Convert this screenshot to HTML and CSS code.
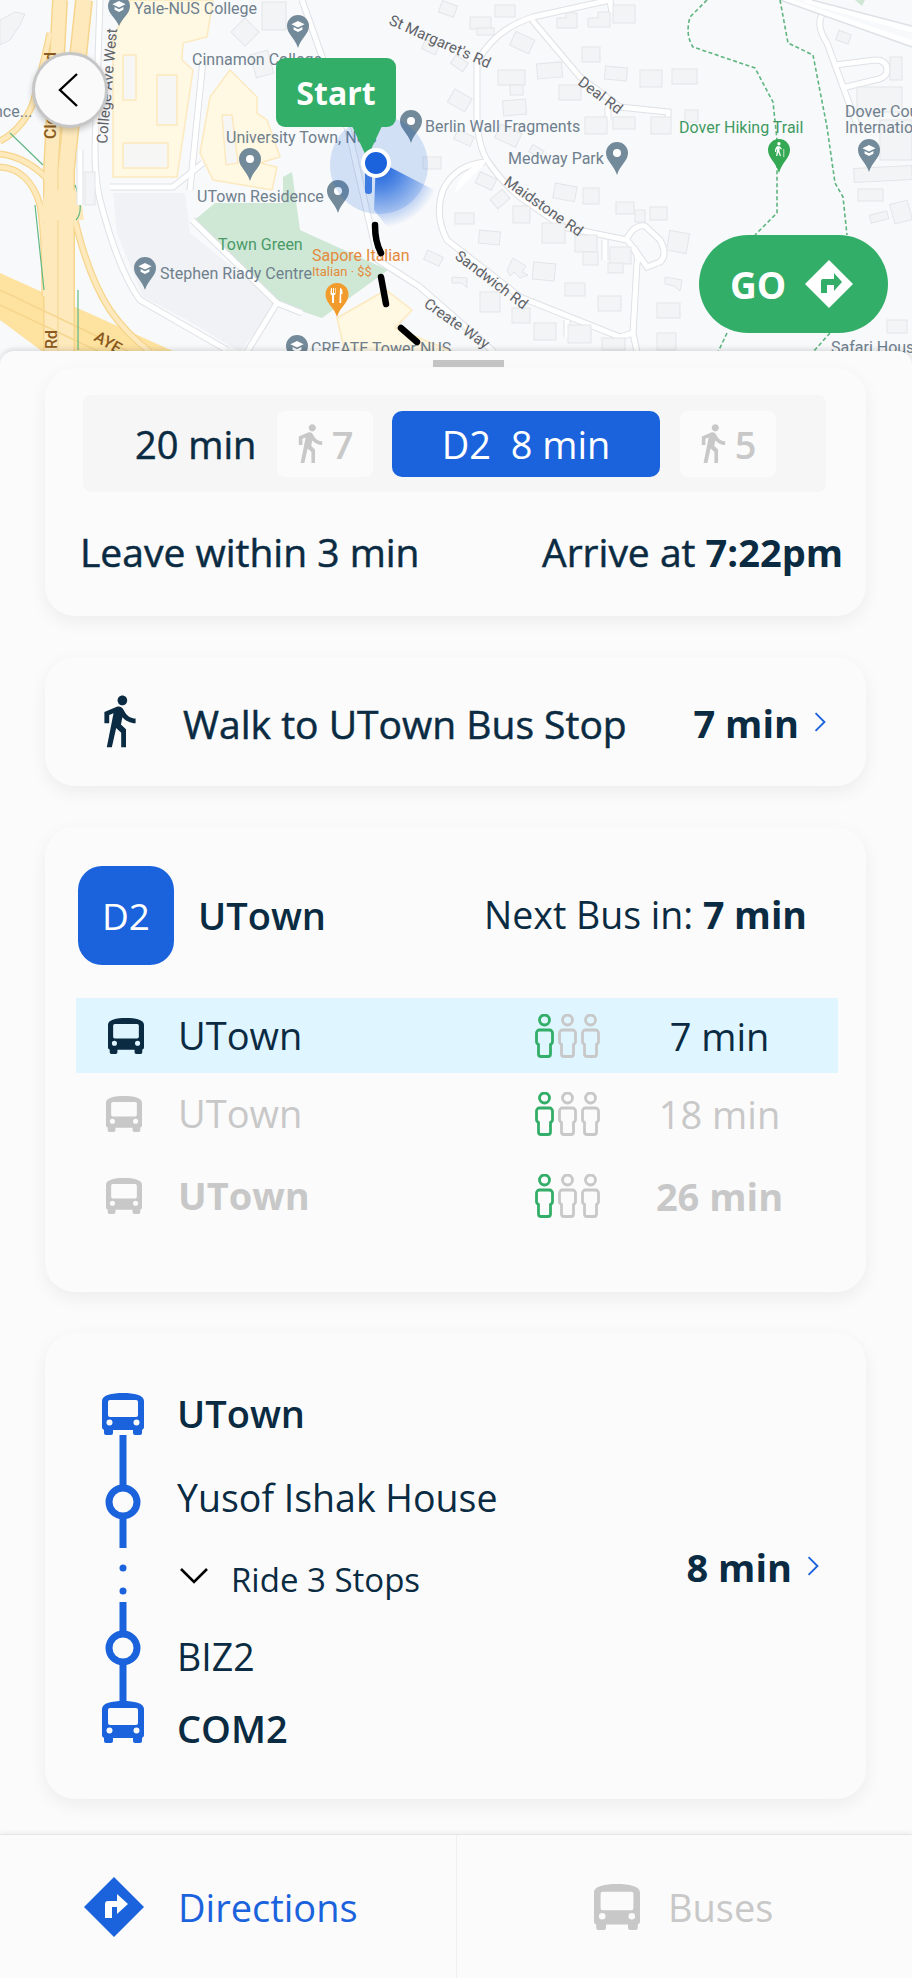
FILE: index.html
```html
<!DOCTYPE html>
<html>
<head>
    <meta charset="utf-8" />
    <title>Directions</title>
    <link rel="stylesheet" href="styles.css">
</head>
<body>

    <svg class="defs" width="0" height="0">
        <symbol id="bus" viewBox="0 0 42 42">
            <path fill-rule="evenodd" d="M0 8C0 2 10 0 21 0s21 2 21 8v26c0 1.500-.8 2.500-2 2.800V40a2 2 0 0 1-2 2h-5a2 2 0 0 1-2-2v-3H11v3a2 2 0 0 1-2 2H4a2 2 0 0 1-2-2v-3.200C.8 36.500 0 35.500 0 34zM8 7a2 2 0 0 0-2 2v13a2 2 0 0 0 2 2h26a2 2 0 0 0 2-2V9a2 2 0 0 0-2-2zM7.500 26.500a3 3 0 1 0 0 6 3 3 0 0 0 0-6zM34.500 26.500a3 3 0 1 0 0 6 3 3 0 0 0 0-6z" />
        </symbol>
        <symbol id="walk" viewBox="5 1 15 23">
            <path d="M13.500 5.500c1.100 0 2-.9 2-2s-.9-2-2-2-2 .9-2 2 .9 2 2 2zM9.800 8.900L7 23h2.100l1.800-8 2.100 2v6h2v-7.500l-2.100-2 .6-3C14.800 12 16.800 13 19 13v-2c-1.900 0-3.500-1-4.300-2.400l-1-1.600c-.4-.6-1-1-1.700-1-.3 0-.5.1-.8.1L6 8.300V13h2V9.600l1.800-.7" />
        </symbol>
        <symbol id="person" viewBox="0 0 21 44">
            <circle cx="10.500" cy="6" r="5" fill="none" stroke="currentColor" stroke-width="2.800" />
            <path fill="none" stroke="currentColor" stroke-width="2.800" stroke-linejoin="round" d="M5.500 16h10a3 3 0 0 1 3 3v8.500a3 3 0 0 1-2 2.800V40a2.500 2.500 0 0 1-2.500 2.500H7A2.500 2.500 0 0 1 4.500 40v-9.700a3 3 0 0 1-2-2.800V19a3 3 0 0 1 3-3z" />
        </symbol>
        <symbol id="chev" viewBox="0 0 12 18">
            <path d="M2 1l8 8-8 8" fill="none" stroke="currentColor" stroke-width="1.700" />
        </symbol>
        <symbol id="cap" viewBox="0 0 12 10">
            <path fill="#fff" d="M0 3l6-3 6 3-6 3zM2 5.500V8l4 2 4-2V5.500L6 7.500z" />
        </symbol>
    </svg>

    <div id="Phone">

        <div class="map">
            <svg class="mapArt" viewBox="0 0 912 370" width="912" height="370">
                <defs>
                    <g id="roads" fill="none">
                        <path d="M610 0L533 17Q493 30 477 63V117Q478 145 487 160Q500 180 520 197L563 227L627 240Q640 255 637 263L633 333L637 352" />
                        <path d="M485 162Q455 165 443 190Q434 215 447 240L520 297L620 337L633 333" />
                        <path d="M532 20L580 77L620 107L668 112V117" />
                        <path d="M627 238Q635 224 645 226L660 240Q668 255 660 262L647 267L633 247" />
                        <path d="M610 0L612 13M608 107V120M605 240V260M567 320V337" />
                        <path d="M302 0L349 133L378 260L420 287L494 352" />
                        <path d="M100 0L95 150Q95 180 100 200Q118 270 140 300L227 350" />
                        <path d="M203 163L173 187H110" />
                        <path d="M203 60L190 190" />
                        <path d="M192 220L277 303L247 352M277 303L302 313" />
                        <path d="M823 13Q815 25 827 43L860 133" />
                        <path d="M835 65L875 60Q887 60 887 70Q887 78 875 80L842 88" />
                        <path d="M80 150V205" />
                    </g>
                    <g id="highway" fill="none">
                        <path stroke-width="18" d="M84 0L66 170V352" />
                        <path stroke-width="16" d="M60 0L51 170V352" />
                        <path stroke-width="7" d="M0 154C20 156 38 168 50 182" />
                        <path stroke-width="7" d="M0 167C18 168 33 180 40 205C46 240 44 270 45 296" />
                        <path stroke-width="7" d="M72 207C78 235 90 280 110 310C122 328 135 340 150 352" />
                        <path stroke-width="7" d="M0 141C12 135 26 122 33 103C38 85 44 60 50 33" />
                    </g>
                    <radialGradient id="beam" gradientUnits="userSpaceOnUse" cx="380" cy="168" r="60">
                        <stop offset="0" stop-color="#1a63dd" />
                        <stop offset=".35" stop-color="#1a63dd" stop-opacity=".7" />
                        <stop offset="1" stop-color="#1a63dd" stop-opacity="0" />
                    </radialGradient>
                </defs>

                <!-- grey campus block -->
                <path fill="#f1f2f5" d="M113 193H185L190 233L277 303L240 352L187 320L143 297L117 233Z" />

                <!-- campus -->
                <path fill="#fff8e3" stroke="#fde9bf" stroke-width="1.500" d="M130 0H213L207 37L183 43L182 60L193 70L177 177H113V40Z" />
                <g fill="#f6f6f4" stroke="#fde9bf" stroke-width="1.500">
                    <rect x="123" y="55" width="13" height="45" />
                    <rect x="157" y="75" width="20" height="50" />
                    <rect x="123" y="143" width="45" height="25" />
                </g>
                <path fill="#fff8e3" stroke="#fde9bf" stroke-width="1.500" d="M230 70L257 97V113L267 120L280 157L260 163L277 167L272 190L213 180L200 153L210 97Z" />
                <path fill="#f6f6f4" stroke="#fde9bf" stroke-width="1.500" d="M222 115L232 115L238 163L226 165Z" />
                <path fill="#fff8e3" stroke="#fde9bf" stroke-width="1.500" d="M337 318L386 290L412 310L395 328L454 352H345Z" />

                <!-- park -->
                <path fill="#cfe8d6" d="M197 218L215 203H283V177L292 172L300 230L388 270L322 318L277 303L192 220Z" />

                <!-- highway -->
                <path fill="#fde2a0" d="M0 273L175 352H43L0 320Z" />
                <use href="#highway" stroke="#f6d58d" />
                <g fill="none" stroke="#fde9bc">
                    <path stroke-width="15" d="M84 0L66 170V352" />
                    <path stroke-width="13" d="M60 0L51 170V352" />
                    <path stroke-width="4.500" d="M0 154C20 156 38 168 50 182" />
                    <path stroke-width="4.500" d="M0 167C18 168 33 180 40 205C46 240 44 270 45 296" />
                    <path stroke-width="4.500" d="M72 207C78 235 90 280 110 310C122 328 135 340 150 352" />
                    <path stroke-width="4.500" d="M0 141C12 135 26 122 33 103C38 85 44 60 50 33" />
                </g>
                <path fill="#fde9bc" d="M45 190H80L84 220H40Z" />
                <path fill="none" stroke="#f6d58d" stroke-width="1.500" d="M0 290L130 352M0 305L100 352" />
                <path fill="none" stroke="#62b883" stroke-width="1.200" d="M10 133L43 165M75 185Q85 210 76 220M35 205L44 290M78 290V350" />

                <!-- roads -->
                <use href="#roads" stroke="#dfe1e6" stroke-width="7" />
                <use href="#roads" stroke="#ffffff" stroke-width="5" />
                <path fill="#ffffff" d="M483 166L455 193Q458 172 485 160Z" />
                <g fill="none" stroke="#ffffff" stroke-width="5">
                    <path d="M785 0L912 43" />
                    <path d="M805 0L912 30" />
                </g>
                <g fill="none" stroke="#dfe1e6" stroke-width="1.500">
                    <path d="M780 0L912 47" />
                    <path d="M812 0L912 26" />
                </g>
                <path fill="#cfe8d6" d="M855 0H865L862 6Z" />

                <!-- buildings -->
                <g fill="#f3f4f6" stroke="#e3e5e8">
                    <rect x="440" y="3" width="16" height="12" transform="rotate(20 448 9)" />
                    <rect x="470" y="17" width="21" height="12" />
                    <rect x="477" y="28" width="17" height="7" />
                    <rect x="495" y="5" width="20" height="12" />
                    <path d="M557 18H566V13H577V28H557Z" />
                    <path d="M588 18H598V12H610V27H588Z" />
                    <rect x="613" y="5" width="22" height="18" />
                    <rect x="512" y="35" width="21" height="15" transform="rotate(25 522 42)" />
                    <rect x="582" y="47" width="18" height="15" />
                    <rect x="498" y="70" width="27" height="15" />
                    <rect x="537" y="63" width="25" height="15" transform="rotate(-5 549 70)" />
                    <rect x="510" y="85" width="13" height="10" />
                    <rect x="559" y="85" width="22" height="15" />
                    <rect x="605" y="67" width="22" height="13" transform="rotate(5 616 73)" />
                    <rect x="640" y="70" width="22" height="17" />
                    <rect x="672" y="69" width="25" height="15" />
                    <rect x="503" y="100" width="23" height="15" transform="rotate(-5 514 107)" />
                    <rect x="450" y="93" width="20" height="15" transform="rotate(30 460 100)" />
                    <rect x="423" y="42" width="15" height="10" transform="rotate(25 430 47)" />
                    <rect x="452" y="58" width="15" height="10" transform="rotate(35 459 63)" />
                    <rect x="585" y="117" width="22" height="17" />
                    <rect x="613" y="117" width="22" height="12" />
                    <rect x="651" y="117" width="20" height="17" />
                    <rect x="685" y="110" width="13" height="12" />
                    <rect x="497" y="128" width="23" height="15" transform="rotate(25 508 135)" />
                    <rect x="455" y="133" width="18" height="10" transform="rotate(25 464 138)" />
                    <rect x="530" y="147" width="13" height="8" transform="rotate(30 536 151)" />
                    <rect x="423" y="157" width="18" height="12" />
                    <rect x="477" y="175" width="18" height="12" transform="rotate(25 486 181)" />
                    <rect x="492" y="193" width="16" height="12" transform="rotate(-40 500 199)" />
                    <rect x="554" y="185" width="22" height="15" transform="rotate(10 565 192)" />
                    <rect x="583" y="188" width="16" height="16" />
                    <rect x="616" y="202" width="18" height="12" />
                    <rect x="635" y="210" width="10" height="12" />
                    <rect x="650" y="207" width="17" height="13" />
                    <rect x="668" y="232" width="20" height="20" transform="rotate(10 678 242)" />
                    <rect x="513" y="206" width="17" height="17" />
                    <rect x="455" y="213" width="19" height="11" />
                    <rect x="542" y="223" width="23" height="20" />
                    <rect x="575" y="235" width="22" height="17" />
                    <rect x="583" y="252" width="15" height="13" />
                    <rect x="610" y="247" width="21" height="17" />
                    <rect x="608" y="263" width="15" height="10" />
                    <rect x="479" y="231" width="21" height="13" transform="rotate(5 489 237)" />
                    <rect x="425" y="253" width="17" height="10" transform="rotate(25 433 258)" />
                    <rect x="533" y="263" width="22" height="17" transform="rotate(5 544 271)" />
                    <path d="M507 270L513 258L526 266L522 272L528 275L520 278L514 272L510 276Z" />
                    <rect x="565" y="283" width="20" height="13" />
                    <rect x="598" y="296" width="23" height="15" />
                    <rect x="480" y="292" width="20" height="20" />
                    <rect x="512" y="308" width="18" height="15" />
                    <rect x="534" y="323" width="22" height="17" />
                    <rect x="568" y="325" width="23" height="18" />
                    <rect x="602" y="338" width="23" height="12" />
                    <rect x="657" y="303" width="23" height="15" />
                    <rect x="657" y="333" width="19" height="17" />
                    <path d="M665 277L682 280L680 291L674 286L665 284Z" />
                    <path d="M452 277L467 278V288L462 283L452 283Z" />
                    <rect x="837" y="32" width="13" height="10" transform="rotate(20 843 37)" />
                    <rect x="890" y="57" width="12" height="23" />
                    <rect x="857" y="87" width="45" height="25" />
                    <rect x="880" y="120" width="32" height="40" />
                    <rect x="854" y="167" width="58" height="14" transform="rotate(-3 883 174)" />
                    <rect x="858" y="189" width="25" height="12" />
                    <rect x="870" y="213" width="18" height="8" transform="rotate(-15 879 217)" />
                    <rect x="892" y="202" width="18" height="20" transform="rotate(-15 901 212)" />
                    <rect x="887" y="320" width="20" height="13" />
                    <rect x="235" y="22" width="20" height="20" transform="rotate(45 245 32)" />
                    <rect x="253" y="52" width="18" height="24" transform="rotate(-15 262 64)" />
                    <rect x="262" y="2" width="24" height="28" />
                    <path d="M0 20L15 12L25 14L20 25L10 40L0 45Z" />
                    <rect x="85" y="172" width="10" height="33" />
                </g>

                <!-- trails -->
                <g fill="none" stroke="#5fb57f" stroke-width="1.600" stroke-dasharray="4 2.500">
                    <path d="M707 0L690 17Q685 35 693 47L755 68L773 102L777 140V213L755 235" />
                    <path d="M780 0L788 43L813 55L827 127L835 183L843 197L847 235" />
                    <path d="M727 333L718 352M830 333L813 352" />
                </g>

                <!-- pins -->
                <g class="pinGrey">
                    <path d="M119 -5a11 11 0 0 1 11 11c0 8-8 12-11 20c-3-8-11-12-11-20a11 11 0 0 1 11-11z" />
                    <path d="M298 15a11 11 0 0 1 11 11c0 8-8 12-11 22c-3-10-11-14-11-22a11 11 0 0 1 11-11z" />
                    <path d="M411 110a11 11 0 0 1 11 11c0 8-8 12-11 22c-3-10-11-14-11-22a11 11 0 0 1 11-11z" />
                    <path d="M617 142a11 11 0 0 1 11 11c0 8-8 12-11 22c-3-10-11-14-11-22a11 11 0 0 1 11-11z" />
                    <path d="M869 139a11 11 0 0 1 11 11c0 8-8 12-11 22c-3-10-11-14-11-22a11 11 0 0 1 11-11z" />
                    <path d="M250 148a11 11 0 0 1 11 11c0 8-8 12-11 22c-3-10-11-14-11-22a11 11 0 0 1 11-11z" />
                    <path d="M338 180a11 11 0 0 1 11 11c0 8-8 12-11 22c-3-10-11-14-11-22a11 11 0 0 1 11-11z" />
                    <path d="M145 257a11 11 0 0 1 11 11c0 8-8 12-11 22c-3-10-11-14-11-22a11 11 0 0 1 11-11z" />
                    <path d="M297 335a11 11 0 0 1 11 11c0 8-8 12-11 22c-3-10-11-14-11-22a11 11 0 0 1 11-11z" />
                </g>
                <g fill="#ffffff">
                    <circle cx="411" cy="121" r="4" /><circle cx="617" cy="153" r="4" />
                    <circle cx="250" cy="159" r="4" /><circle cx="338" cy="191" r="4" />
                </g>
                <use href="#cap" x="112" y="1" width="14" height="11" />
                <use href="#cap" x="291" y="21" width="14" height="11" />
                <use href="#cap" x="862" y="145" width="14" height="11" />
                <use href="#cap" x="138" y="263" width="14" height="11" />
                <use href="#cap" x="290" y="341" width="14" height="11" />
                <path fill="#34a853" d="M779 139a11 11 0 0 1 11 11c0 8-8 12-11 23c-3-11-11-15-11-23a11 11 0 0 1 11-11z" />
                <path fill="#ffffff" d="M779 142a1.700 1.700 0 1 1-.1 0zM777 146l3 .5 2 2.500-1 .5-1.500-1.500v3l1.500 5h-1.200l-1.500-4-1 4h-1.200l1-7-1 1v2h-1v-3zM783.500 149h.7v8h-.7z" />
                <path fill="#f29b2d" d="M337 283a11.500 11.500 0 0 1 11.500 11.500c0 9-8.500 12-11.500 22.500c-3-10.500-11.500-13.500-11.500-22.500a11.500 11.500 0 0 1 11.500-11.500z" />
                <path fill="#ffffff" d="M331 288h1v5h1v-5h1v5h1v-5h.6v6l-1.600 1.500V303h-2v-7.500l-1.600-1.500zM340 288c2 0 2.600 3 2.600 6h-1.400v9h-1.800z" />

                <!-- labels -->
                <g class="lbl">
                    <text x="134" y="14">Yale-NUS College</text>
                    <text x="192" y="65">Cinnamon College</text>
                    <text x="425" y="132">Berlin Wall Fragments</text>
                    <text x="508" y="164">Medway Park</text>
                    <text x="845" y="117">Dover Cou</text>
                    <text x="845" y="133">Internation</text>
                    <text x="226" y="143">University Town, NUS</text>
                    <text x="197" y="202">UTown Residence</text>
                    <text x="160" y="279">Stephen Riady Centre</text>
                    <text x="311" y="354">CREATE Tower NUS</text>
                    <text x="831" y="353">Safari Hous</text>
                    <text x="-6" y="117">nce...</text>
                    <text class="lblRoad" transform="translate(388 24) rotate(24)">St Margaret's Rd</text>
                    <text class="lblRoad" transform="translate(577 84) rotate(37)">Deal Rd</text>
                    <text class="lblRoad" transform="translate(503 184) rotate(35)">Maidstone Rd</text>
                    <text class="lblRoad" transform="translate(454 258) rotate(37)">Sandwich Rd</text>
                    <text class="lblRoad" transform="translate(423 306) rotate(35)">Create Way</text>
                    <text class="lblRoad" transform="translate(107 144) rotate(-85)">College Ave West</text>
                </g>
                <g class="lbl lblBrown">
                    <text transform="translate(56 139) rotate(-90)">Clementi Rd</text>
                    <text transform="translate(57 349) rotate(-90)">Rd</text>
                    <text transform="translate(93 340) rotate(30)">AYE</text>
                </g>
                <text class="lbl lblGreen" x="679" y="133">Dover Hiking Trail</text>
                <text class="lbl lblPark" x="218" y="250">Town Green</text>
                <text class="lbl lblFood" x="312" y="261">Sapore Italian</text>
                <text class="lbl lblFood lblSmall" x="312" y="276">Italian · $$</text>

                <!-- route -->
                <g fill="none" stroke="#000000" stroke-width="6.500" stroke-linecap="round">
                    <path d="M375 225Q375 242 381 253" />
                    <path d="M381 277L386 304" />
                    <path d="M401 328L417 342" />
                </g>

                <!-- you are here -->
                <circle cx="379" cy="165" r="49" fill="#1a63dd" fill-opacity=".17" />
                <path d="M376 160L442 194L396 238L374 210Z" fill="url(#beam)" />
                <rect x="365" y="170" width="7" height="24" rx="3" fill="#1a63dd" fill-opacity=".8" />
            </svg>

            <div class="backBtn">
                <svg width="22" height="34" viewBox="0 0 22 34"><path d="M20 1L3 17l17 16" fill="none" stroke="#000" stroke-width="2.400" /></svg>
            </div>

            <div class="startPin">
                <span>Start</span>
            </div>
            <div class="startTip"></div>
            <div class="dot"></div>

            <div class="goBtn">
                <span>GO</span>
                <svg width="48" height="48" viewBox="0 0 48 48">
                    <path fill="#ffffff" d="M24 0L48 24L24 48L0 24Z" />
                    <path fill="#33ae68" d="M16 33V21a2 2 0 0 1 2-2h11v-6l8 9-8 9v-6h-7v8z" />
                </svg>
            </div>
        </div>

        <div class="sheet">
            <div class="handle"></div>

            <div class="card card1">
                <div class="seg">
                    <span class="segText">20 min</span>
                    <span class="chip chip7">
                        <svg class="chipIcon"><use href="#walk" /></svg>7
                    </span>
                    <span class="chipBlue">D2&nbsp; 8 min</span>
                    <span class="chip chip5">
                        <svg class="chipIcon"><use href="#walk" /></svg>5
                    </span>
                </div>
                <div class="summary">
                    <span>Leave within 3 min</span>
                    <span>Arrive at <b>7:22pm</b></span>
                </div>
            </div>

            <div class="card card2">
                <svg class="walkIcon"><use href="#walk" /></svg>
                <span class="walkText">Walk to UTown Bus Stop</span>
                <b class="mins">7 min</b>
                <svg class="chev"><use href="#chev" /></svg>
            </div>

            <div class="card card3">
                <div class="busHead">
                    <div class="badge">D2</div>
                    <b class="busName">UTown</b>
                    <span class="nextBus">Next Bus in: <b>7 min</b></span>
                </div>

                <div class="busRow active">
                    <svg class="rowBus"><use href="#bus" /></svg>
                    <span class="rowName">UTown</span>
                    <span class="load">
                        <svg class="on"><use href="#person" /></svg><svg><use href="#person" /></svg><svg><use href="#person" /></svg>
                    </span>
                    <span class="rowTime">7 min</span>
                </div>
                <div class="busRow pale">
                    <svg class="rowBus"><use href="#bus" /></svg>
                    <span class="rowName">UTown</span>
                    <span class="load">
                        <svg class="on"><use href="#person" /></svg><svg><use href="#person" /></svg><svg><use href="#person" /></svg>
                    </span>
                    <span class="rowTime">18 min</span>
                </div>
                <div class="busRow pale heavy">
                    <svg class="rowBus"><use href="#bus" /></svg>
                    <span class="rowName">UTown</span>
                    <span class="load">
                        <svg class="on"><use href="#person" /></svg><svg><use href="#person" /></svg><svg><use href="#person" /></svg>
                    </span>
                    <span class="rowTime">26 min</span>
                </div>
            </div>

            <div class="card card4">
                <svg class="line" width="42" height="350" viewBox="0 0 42 350">
                    <use href="#bus" x="0" y="0" width="42" height="42" />
                    <rect x="17.500" y="42" width="7" height="113" />
                    <circle cx="21" cy="109" r="14" fill="#fbfbfb" stroke="#1a63dd" stroke-width="7" />
                    <circle cx="21" cy="175" r="3.500" />
                    <circle cx="21" cy="198" r="3.500" />
                    <rect x="17.500" y="209" width="7" height="100" />
                    <circle cx="21" cy="255" r="14" fill="#fbfbfb" stroke="#1a63dd" stroke-width="7" />
                    <use href="#bus" x="0" y="308" width="42" height="42" />
                </svg>
                <div class="stops">
                    <b class="stop">UTown</b>
                    <span class="stop stop2">Yusof Ishak House</span>
                    <span class="stop stop3">
                        <svg class="down" width="30" height="18" viewBox="0 0 30 18"><path d="M2 2l13 13L28 2" fill="none" stroke="#000" stroke-width="2.600" /></svg>
                        Ride 3 Stops
                    </span>
                    <span class="stop stop4">BIZ2</span>
                    <b class="stop stop5">COM2</b>
                </div>
                <b class="mins rideMins">8 min</b>
                <svg class="chev rideChev"><use href="#chev" /></svg>
            </div>

            <div class="tabs">
                <div class="tab tabOn">
                    <svg width="60" height="60" viewBox="0 0 60 60">
                        <path fill="#1a63dd" d="M30 0L60 30L30 60L0 30Z" />
                        <path fill="#ffffff" d="M21 41V27a3 3 0 0 1 3-3h9v-7l11 10-11 10v-7h-5v11z" />
                    </svg>
                    <span>Directions</span>
                </div>
                <div class="tab tabOff">
                    <svg width="48" height="46"><use href="#bus" /></svg>
                    <span>Buses</span>
                </div>
            </div>
        </div>

    </div>

</body>
</html>
```

FILE: styles.css
```css
* {
    box-sizing: border-box;
}

body {
    margin: 0;
    background-color: #fbfbfb;
    font-family: "Open Sans", "Noto Sans", sans-serif;
    color: #0a2b42;
}

b {
    font-weight: 700;
}

.defs {
    position: absolute;
}

#Phone {
    width: 912px;
    height: 1978px;
    overflow: hidden;
}

/* map */
.map {
    position: relative;
    height: 370px;
    background-color: #f8f9fb;
    overflow: hidden;
}

.mapArt {
    display: block;
}

.pinGrey {
    fill: #728a99;
}

.lbl {
    font-family: "Roboto", sans-serif;
    font-size: 16px;
    fill: #6f808d;
}

.lblRoad {
    fill: #5f6368;
    font-size: 15px;
}

.lblBrown {
    fill: #8a5a20;
    font-weight: 500;
}

.lblGreen {
    fill: #3f9a62;
}

.lblPark {
    fill: #4a9a68;
}

.lblFood {
    fill: #e58a3c;
}

.lblSmall {
    font-size: 13px;
}

.backBtn {
    position: absolute;
    left: 32px;
    top: 52px;
    width: 76px;
    height: 76px;
    display: flex;
    align-items: center;
    justify-content: center;
    padding-right: 4px;
    background-color: #fafafa;
    border: 3px solid #c6c6c6;
    border-radius: 50%;
    box-shadow: 0 3px 6px rgba(0, 0, 0, .2);
}

.startPin {
    position: absolute;
    left: 276px;
    top: 58px;
    width: 120px;
    height: 69px;
    display: flex;
    align-items: center;
    justify-content: center;
    background-color: #33ae68;
    border-radius: 9px;
    color: #fff;
    font-size: 32px;
    font-weight: 700;
}

.startTip {
    position: absolute;
    left: 352px;
    top: 126px;
    width: 30px;
    height: 32px;
    background-color: #33ae68;
    clip-path: polygon(0 0, 100% 0, 50% 100%);
}

.dot {
    position: absolute;
    left: 361px;
    top: 148px;
    width: 30px;
    height: 30px;
    background-color: #1a63dd;
    border: 4px solid #fff;
    border-radius: 50%;
}

.goBtn {
    position: absolute;
    left: 699px;
    top: 235px;
    width: 189px;
    height: 98px;
    display: flex;
    align-items: center;
    padding-left: 31px;
    gap: 19px;
    background-color: #33ae68;
    border-radius: 49px;
    color: #fff;
    font-size: 37px;
    font-weight: 700;
}

/* sheet */
.sheet {
    position: relative;
    margin-top: -19px;
    height: 1627px;
    padding: 17px 46px 0 45px;
    background-color: #fbfbfb;
    border-radius: 14px 14px 0 0;
    box-shadow: 0 -2px 5px rgba(0, 0, 0, .12);
}

.handle {
    position: absolute;
    left: 433px;
    top: 9px;
    width: 71px;
    height: 7px;
    background-color: #c4c4c4;
}

.card {
    background-color: #fbfbfb;
    border-radius: 30px;
    box-shadow: 0 6px 18px rgba(0, 0, 0, .06);
    margin-bottom: 41px;
}

/* card 1 */
.card1 {
    height: 248px;
    padding-top: 27px;
}

.seg {
    display: flex;
    align-items: center;
    width: 743px;
    height: 97px;
    margin-left: 38px;
    padding-left: 52px;
    background-color: #f6f6f6;
    border-radius: 8px;
}

.segText {
    width: 142px;
    font-size: 38px;
    -webkit-text-stroke: .5px currentColor;
}

.chip {
    display: flex;
    align-items: center;
    justify-content: center;
    gap: 8px;
    width: 96px;
    height: 66px;
    background-color: #fbfbfb;
    border-radius: 8px;
    color: #c8c8c8;
    font-size: 38px;
    font-weight: 600;
}

.chipIcon {
    width: 27px;
    height: 42px;
    fill: #c8c8c8;
}

.chipBlue {
    display: flex;
    align-items: center;
    justify-content: center;
    width: 268px;
    height: 66px;
    margin: 0 20px 0 19px;
    background-color: #1a63dd;
    border-radius: 10px;
    color: #fff;
    font-size: 38px;
}

.summary {
    display: flex;
    justify-content: space-between;
    margin-top: 40px;
    padding: 0 23px 0 35px;
    font-size: 39px;
    line-height: 40px;
    -webkit-text-stroke: .5px currentColor;
}

.summary b {
    font-size: 38px;
    -webkit-text-stroke: 0;
}

/* card 2 */
.card2 {
    display: flex;
    align-items: center;
    height: 129px;
    padding-left: 57px;
}

.walkIcon {
    width: 36px;
    height: 58px;
    fill: #0a2b42;
}

.walkText {
    margin: 3px 0 0 45px;
    font-size: 39px;
    -webkit-text-stroke: .5px currentColor;
}

.mins {
    margin: 3px 0 0 auto;
    font-size: 38px;
}

.chev {
    width: 14px;
    height: 20px;
    margin: 0 39px 0 14px;
    color: #1a63dd;
}

/* card 3 */
.card3 {
    height: 465px;
    padding-top: 39px;
}

.busHead {
    display: flex;
    align-items: center;
    height: 99px;
    margin-bottom: 33px;
    padding: 0 59px 0 33px;
}

.badge {
    display: flex;
    align-items: center;
    justify-content: center;
    width: 96px;
    height: 99px;
    background-color: #1a63dd;
    border-radius: 24px;
    color: #fff;
    font-size: 37px;
}

.busName {
    margin: 0 0 2px 24px;
    font-size: 38px;
    font-weight: 600;
}

.nextBus {
    margin: 0 0 2px auto;
    font-size: 37.500px;
}

.busRow {
    display: flex;
    align-items: center;
    height: 82px;
    margin: 0 28px 0 31px;
    padding-left: 30px;
    font-size: 38px;
}

.rowBus {
    width: 36px;
    height: 36px;
    fill: #c8c8c8;
}

.rowName {
    flex: 1;
    margin: 0 0 2px 36px;
    line-height: 1;
}

.load {
    display: flex;
    gap: 2px;
    width: 67px;
    height: 44px;
    color: #c8c8c8;
}

.load svg {
    width: 21px;
    height: 44px;
}

.load .on {
    color: #33ae68;
}

.rowTime {
    flex: 0 0 237px;
    text-align: center;
}

.active {
    height: 75px;
    padding-left: 32px;
    background-color: #dff5ff;
}

.active .rowBus {
    fill: #0a2b42;
}

.active .rowName {
    margin-left: 34px;
}

.pale {
    color: #c8c8c8;
}

.heavy {
    font-weight: 700;
}

/* card 4 */
.card4 {
    display: flex;
    align-items: center;
    height: 466px;
    padding-left: 57px;
    margin-bottom: 35px;
}

.line {
    fill: #1a63dd;
    align-self: flex-start;
    margin-top: 60px;
}

.stops {
    display: flex;
    flex-direction: column;
    align-self: flex-start;
    margin: 59px 0 0 33px;
    font-size: 37.500px;
}

.stop {
    display: flex;
    align-items: center;
    height: 42px;
    font-weight: 400;
}

b.stop {
    font-size: 38px;
    font-weight: 600;
}

.stop2 {
    margin-top: 42px;
}

.stop3 {
    margin-top: 40px;
    font-size: 33px;
}

.down {
    margin: -6px 22px 0 2px;
}

.stop4 {
    margin-top: 35px;
}

b.stop5 {
    margin-top: 30px;
}

.rideMins {
    margin-top: 2px;
}

.rideChev {
    margin-right: 46px;
}

/* tabs */
.tabs {
    display: flex;
    height: 145px;
    margin: 0 -46px 0 -45px;
    border-top: 1px solid #e6e6e6;
    box-shadow: 0 -2px 4px rgba(0, 0, 0, .05);
    font-size: 38px;
}

.tab {
    display: flex;
    align-items: center;
}

.tabOn {
    width: 457px;
    padding-left: 84px;
    gap: 34px;
    border-right: 1px solid #efefef;
    color: #1a63dd;
}

.tabOff {
    flex: 1;
    padding-left: 136px;
    gap: 27px;
    color: #c8c8c8;
    fill: #c8c8c8;
}
```
